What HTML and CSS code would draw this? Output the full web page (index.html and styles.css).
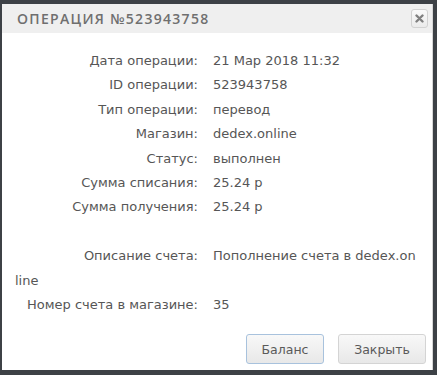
FILE: index.html
```html
<!DOCTYPE html>
<html lang="ru">
<head>
    <meta charset="UTF-8">
    <title>Операция</title>
    <link rel="stylesheet" href="styles.css">
</head>
<body>
<div class="dialog">
    <div class="dialog_title">
        <span class="title_text">Операция №523943758</span>
        <button class="close_button" title="Закрыть">
            <svg width="9" height="9" viewBox="0 0 9 9"><path d="M1.5 1.5L7.5 7.5M7.5 1.5L1.5 7.5" stroke="#808080" stroke-width="2.4" stroke-linecap="round"/></svg>
        </button>
    </div>

    <div class="dialog_body">
        <div class="row"><span class="label">Дата операции:</span><span class="value">21 Мар 2018 11:32</span></div>
        <div class="row"><span class="label">ID операции:</span><span class="value">523943758</span></div>
        <div class="row"><span class="label">Тип операции:</span><span class="value">перевод</span></div>
        <div class="row"><span class="label">Магазин:</span><span class="value">dedex.online</span></div>
        <div class="row"><span class="label">Статус:</span><span class="value">выполнен</span></div>
        <div class="row"><span class="label">Сумма списания:</span><span class="value">25.24 р</span></div>
        <div class="row"><span class="label">Сумма получения:</span><span class="value">25.24 р</span></div>
        <div class="row empty"></div>
        <div class="row"><span class="label">Описание счета:</span><span class="value">Пополнение счета в dedex.on<br>line</span></div>
        <div class="row"><span class="label">Номер счета в магазине:</span><span class="value">35</span></div>
    </div>

    <div class="dialog_buttons">
        <button class="btn btn_focus">Баланс</button>
        <button class="btn btn_close">Закрыть</button>
    </div>
</div>
</body>
</html>
```

FILE: styles.css
```css
html, body {
    margin: 0;
    height: 100%;
}

body {
    background-color: #3d4146;
    padding: 4px 4px 5px 2px;
    box-sizing: border-box;
    font-family: "Open Sans", "Noto Sans", sans-serif;
}

.dialog {
    height: 100%;
    background-color: #ffffff;
    border-right: 1px solid #d6d6d6;
    display: flex;
    flex-direction: column;
}

.dialog_title {
    height: 29px;
    background-color: #efefef;
    display: flex;
    align-items: center;
    justify-content: space-between;
    padding: 0 4px 0 15px;
}

.title_text {
    text-transform: uppercase;
    font-size: 14px;
    font-weight: 600;
    letter-spacing: 1.3px;
    color: #6f6f6f;
}

.close_button {
    width: 17px;
    height: 19px;
    padding: 0;
    border: 1px solid #d2d2d2;
    border-radius: 3px;
    background: linear-gradient(#fafafa, #ebebeb);
    display: flex;
    align-items: center;
    justify-content: center;
}

.dialog_body {
    padding: 16px 12px 0 13px;
    font-family: "DejaVu Sans", Verdana, sans-serif;
    font-size: 13px;
    line-height: 24.4px;
    color: #565656;
}

.row.empty {
    height: 24.4px;
}

.label {
    display: inline-block;
    box-sizing: border-box;
    width: 198px;
    text-align: right;
    padding-right: 15px;
}

.dialog_buttons {
    display: flex;
    justify-content: flex-end;
    gap: 14px;
    padding: 17px 6px 0 0;
}

.btn {
    height: 30px;
    padding: 0;
    font-family: "DejaVu Sans", Verdana, sans-serif;
    font-size: 12.5px;
    color: #5a5a5a;
    border: 1px solid #d4d4d4;
    border-radius: 3px;
    background: linear-gradient(#f8f8f8, #e8e8e8);
}

.btn_focus {
    width: 78px;
    border-color: #a8c2dd;
}

.btn_close {
    width: 88px;
}
```
